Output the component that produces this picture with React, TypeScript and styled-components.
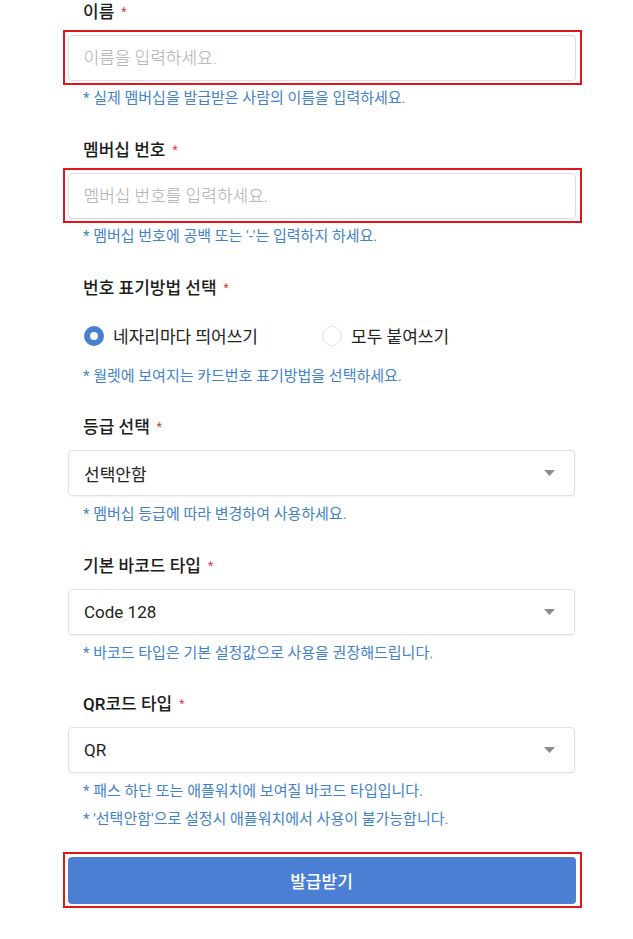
import React from "react";
import styled, { createGlobalStyle } from "styled-components";

const GlobalStyle = createGlobalStyle`
  html, body {
    margin: 0;
    padding: 0;
    background: #ffffff;
  }
  body {
    font-family: Roboto, "Noto Sans CJK KR", "Noto Sans", sans-serif;
    color: #222222;
  }
  * { box-sizing: border-box; }
`;

const Form = styled.form`
  display: flex;
  flex-direction: column;
  width: 507px;
  margin-left: 68px;
  padding-bottom: 36px;
`;

const Field = styled.div<{ $gap?: number }>`
  display: flex;
  flex-direction: column;
  margin-bottom: ${(p) => (p.$gap ?? 30)}px;
`;

const Label = styled.div`
  padding-left: 15px;
  font-size: 17px;
  line-height: 24px;
  font-weight: 500;
  color: #1c1c1c;
  display: flex;
  align-items: center;
`;

const Required = styled.span`
  color: #e0383e;
  font-size: 12px;
  font-weight: 400;
  margin-left: 7px;
`;

const Highlight = styled.div`
  border: 2.5px solid #e3141c;
  padding: 2.5px 4.5px 2px 2.5px;
  margin: -5px -7px -4.5px -5px;
`;

const InputBox = styled.input`
  display: block;
  width: 100%;
  height: 46px;
  border: 1px solid #dedede;
  border-radius: 4px;
  padding: 0 15px;
  font-family: inherit;
  font-size: 17px;
  color: #222;
  background: #fff;
  box-shadow: 0 1px 2px rgba(0, 0, 0, 0.04);
  outline: none;
  &::placeholder {
    color: #ababab;
    font-weight: 300;
  }
`;

const InputSlot = styled.div`
  margin-top: 11px;
`;

const SelectBox = styled.div`
  margin-top: 11px;
  height: 46px;
  border: 1px solid #e0e0e0;
  border-radius: 4px;
  padding: 0 19px 0 15px;
  display: flex;
  align-items: center;
  justify-content: space-between;
  font-size: 17px;
  color: #222;
  background: #fff;
  box-shadow: 0 1px 2px rgba(0, 0, 0, 0.05);
`;

const Help = styled.p<{ $top?: number }>`
  margin: ${(p) => p.$top ?? 8}px 0 0;
  padding-left: 15px;
  font-size: 15px;
  line-height: 20px;
  color: #4282cb;
`;

const RadioRow = styled.div`
  margin-top: 23px;
  padding-left: 16px;
  display: grid;
  grid-template-columns: 238px auto;
  height: 24px;
  align-items: center;
`;

const RadioOption = styled.label`
  display: flex;
  align-items: center;
  gap: 9px;
  font-size: 17px;
  color: #222;
`;

const RadioDot = styled.span<{ $checked?: boolean }>`
  width: 20px;
  height: 20px;
  border-radius: 50%;
  background: #fff;
  border: ${(p) => (p.$checked ? "6px solid #4a7fd4" : "1.5px solid #e2e2e2")};
  flex-shrink: 0;
`;

const SubmitButton = styled.button`
  display: block;
  width: 100%;
  height: 47px;
  border: none;
  border-radius: 4px;
  background: #4a7fd3;
  color: #ffffff;
  font-family: inherit;
  font-size: 17px;
  font-weight: 500;
`;

const ButtonSlot = styled.div`
  margin-top: 28px;
`;

const Caret = () => (
  <svg width="11" height="6" viewBox="0 0 11 6">
    <path d="M0 0 H11 L5.5 6 Z" fill="#8c8c8c" />
  </svg>
);

const Req = () => <Required>*</Required>;

export default function App() {
  return (
    <>
      <GlobalStyle />
      <Form onSubmit={(e) => e.preventDefault()}>
        <Field>
          <Label>
            이름<Req />
          </Label>
          <InputSlot>
            <Highlight>
              <InputBox placeholder="이름을 입력하세요." />
            </Highlight>
          </InputSlot>
          <Help>* 실제 멤버십을 발급받은 사람의 이름을 입력하세요.</Help>
        </Field>

        <Field>
          <Label>
            멤버십 번호<Req />
          </Label>
          <InputSlot>
            <Highlight>
              <InputBox placeholder="멤버십 번호를 입력하세요." />
            </Highlight>
          </InputSlot>
          <Help>* 멤버십 번호에 공백 또는 '-'는 입력하지 하세요.</Help>
        </Field>

        <Field $gap={29}>
          <Label>
            번호 표기방법 선택<Req />
          </Label>
          <RadioRow>
            <RadioOption>
              <RadioDot $checked />
              네자리마다 띄어쓰기
            </RadioOption>
            <RadioOption>
              <RadioDot />
              모두 붙여쓰기
            </RadioOption>
          </RadioRow>
          <Help $top={19}>* 월렛에 보여지는 카드번호 표기방법을 선택하세요.</Help>
        </Field>

        <Field>
          <Label>
            등급 선택<Req />
          </Label>
          <SelectBox>
            <span>선택안함</span>
            <Caret />
          </SelectBox>
          <Help>* 멤버십 등급에 따라 변경하여 사용하세요.</Help>
        </Field>

        <Field $gap={29}>
          <Label>
            기본 바코드 타입<Req />
          </Label>
          <SelectBox>
            <span>Code 128</span>
            <Caret />
          </SelectBox>
          <Help>* 바코드 타입은 기본 설정값으로 사용을 권장해드립니다.</Help>
        </Field>

        <Field $gap={0}>
          <Label>
            QR코드 타입<Req />
          </Label>
          <SelectBox>
            <span>QR</span>
            <Caret />
          </SelectBox>
          <Help>* 패스 하단 또는 애플워치에 보여질 바코드 타입입니다.</Help>
          <Help>* '선택안함'으로 설정시 애플워치에서 사용이 불가능합니다.</Help>
        </Field>

        <ButtonSlot>
          <Highlight>
            <SubmitButton type="submit">발급받기</SubmitButton>
          </Highlight>
        </ButtonSlot>
      </Form>
    </>
  );
}
